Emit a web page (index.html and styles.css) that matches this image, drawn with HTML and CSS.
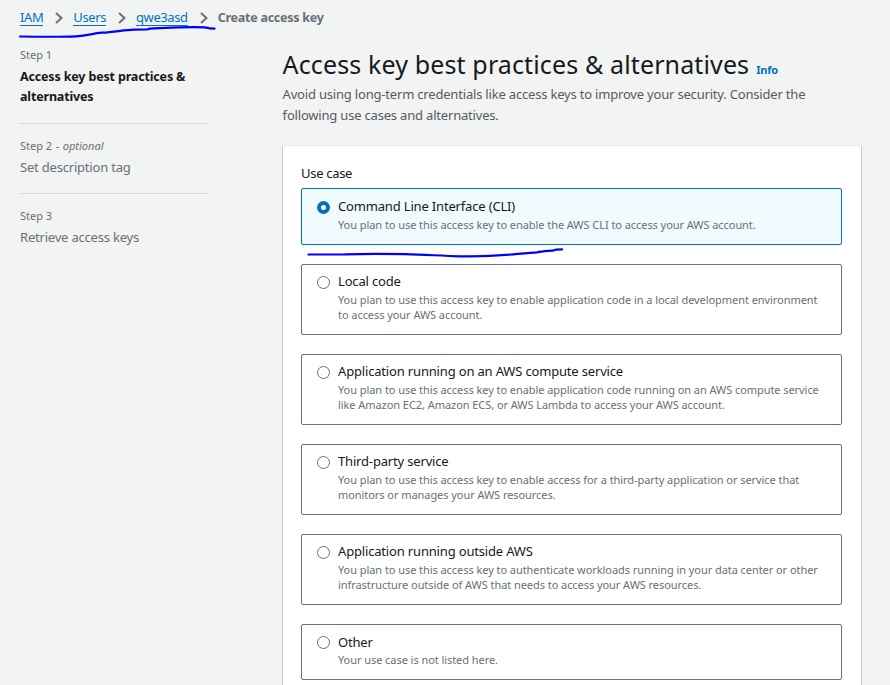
FILE: index.html
```html
<!DOCTYPE html>
<html lang="en">
<head>
<meta charset="utf-8">
<title>Create access key</title>
<link rel="stylesheet" href="styles.css">
</head>
<body>
<nav class="breadcrumbs">
  <a class="crumb">IAM</a>
  <svg class="chevron" viewBox="0 0 8 12"><path d="M1 1l5.500 5L1 11"/></svg>
  <a class="crumb">Users</a>
  <svg class="chevron" viewBox="0 0 8 12"><path d="M1 1l5.500 5L1 11"/></svg>
  <a class="crumb">qwe3asd</a>
  <svg class="chevron" viewBox="0 0 8 12"><path d="M1 1l5.500 5L1 11"/></svg>
  <span class="current">Create access key</span>
</nav>
<div class="layout">
  <aside class="steps">
    <div class="step active">
      <div class="step-label">Step 1</div>
      <div class="step-title">Access key best practices &amp; alternatives</div>
    </div>
    <div class="step">
      <div class="step-label">Step 2 <span class="dash">-</span> <em>optional</em></div>
      <div class="step-title">Set description tag</div>
    </div>
    <div class="step">
      <div class="step-label">Step 3</div>
      <div class="step-title">Retrieve access keys</div>
    </div>
  </aside>
  <main class="content">
    <h1>Access key best practices &amp; alternatives <a class="info">Info</a></h1>
    <p class="intro">Avoid using long-term credentials like access keys to improve your security. Consider the following use cases and alternatives.</p>
    <section class="card">
      <div class="field-label">Use case</div>
      <div class="tiles">
        <div class="tile selected">
          <span class="radio"></span>
          <div><div class="tile-title">Command Line Interface (CLI)</div>
          <div class="tile-text">You plan to use this access key to enable the AWS CLI to access your AWS account.</div></div>
        </div>
        <div class="tile">
          <span class="radio"></span>
          <div><div class="tile-title">Local code</div>
          <div class="tile-text">You plan to use this access key to enable application code in a local development environment<br>to access your AWS account.</div></div>
        </div>
        <div class="tile">
          <span class="radio"></span>
          <div><div class="tile-title">Application running on an AWS compute service</div>
          <div class="tile-text">You plan to use this access key to enable application code running on an AWS compute service<br>like Amazon EC2, Amazon ECS, or AWS Lambda to access your AWS account.</div></div>
        </div>
        <div class="tile">
          <span class="radio"></span>
          <div><div class="tile-title">Third-party service</div>
          <div class="tile-text">You plan to use this access key to enable access for a third-party application or service that<br>monitors or manages your AWS resources.</div></div>
        </div>
        <div class="tile">
          <span class="radio"></span>
          <div><div class="tile-title">Application running outside AWS</div>
          <div class="tile-text">You plan to use this access key to authenticate workloads running in your data center or other<br>infrastructure outside of AWS that needs to access your AWS resources.</div></div>
        </div>
        <div class="tile last">
          <span class="radio"></span>
          <div><div class="tile-title">Other</div>
          <div class="tile-text">Your use case is not listed here.</div></div>
        </div>
      </div>
    </section>
  </main>
</div>
<svg class="marks" viewBox="0 0 890 685">
  <path d="M20 36.500C40 36.800 60 37 76 36.300C88 35.700 92 33.500 102 32.700C114 32.200 124 30 134 29.700L147 29.500L150 28.600C165 28 178 27.200 194 27.200C202 27.200 208 27.600 210 28.400L214.500 28.700"/>
  <path d="M308.500 254.500L345 254.400C365 253.600 385 253.700 405 254.200C425 254.600 440 255.800 460 256.300C485 256.700 505 255.200 518 253.800L537 252.400C542 250.900 549 251 554 250.400L556 249.600L562 249.400"/>
</svg>
</body>
</html>
```
FILE: styles.css
```css
* { box-sizing: border-box; }
body {
  margin: 0;
  height: 685px;
  overflow: hidden;
  position: relative;
  background: #f2f3f3;
  color: #16191f;
  font: 13px/20px "Noto Sans", sans-serif;
  letter-spacing: -0.19px;
}
.breadcrumbs {
  display: flex;
  align-items: flex-start;
  height: 20px;
  margin: 7px 0 0 20px;
  color: #687078;
}
.crumb {
  height: 19px;
  border-bottom: 1px solid #0073bb;
  color: #0073bb;
  white-space: nowrap;
  letter-spacing: -0.4px;
}
.chevron {
  width: 8px;
  height: 12px;
  margin: 5px 10px 0 12px;
  flex: none;
  fill: none;
  stroke: #687078;
  stroke-width: 2;
}
.current { padding-top: 1px; font-weight: 700; font-size: 12.5px; letter-spacing: -0.25px; }
.layout {
  display: grid;
  grid-template-columns: 188px 580px;
  column-gap: 74px;
  margin-left: 20px;
}
.steps { padding-top: 20px; color: #687078; }
.step { padding-bottom: 16px; border-bottom: 1px solid #d5dbdb; margin-bottom: 14px; }
.step:last-child { border-bottom: 0; }
.step-label { font-size: 11px; line-height: 16px; letter-spacing: 0; }
.dash { margin: 0 0.7px; }
.step-title { margin-top: 3px; letter-spacing: -0.2px; }
.active .step-title {
  margin-top: 4px;
  color: #16191f;
  font-weight: 700;
  font-size: 12.5px;
  letter-spacing: -0.16px;
}
.content { padding-top: 22px; }
h1 {
  margin: 0;
  height: 35px;
  padding-left: 0.6px;
  font-size: 25px;
  line-height: 30px;
  font-weight: 400;
  letter-spacing: 0.13px;
  white-space: nowrap;
}
.info {
  margin-left: 0.5px;
  font-size: 11px;
  font-weight: 700;
  letter-spacing: -0.3px;
  color: #0073bb;
}
.intro { margin: 0 0 19px; padding-left: 0.6px; line-height: 21px; color: #545b64; }
.card {
  height: 560px;
  padding: 17px 19px 0 18px;
  background: #fff;
  border: 1px solid #cbd0d0;
  border-top-color: #eaeded;
}
.field-label { margin-bottom: 5px; letter-spacing: -0.3px; }
.tiles { display: flex; flex-direction: column; gap: 19px; }
.tile {
  display: flex;
  padding: 6px 8px 12px 15px;
  border: 1px solid #687078;
  border-radius: 2px;
}
.radio {
  flex: none;
  width: 13px;
  height: 13px;
  margin: 5px 8px 0 0;
  border: 1px solid #687078;
  border-radius: 50%;
  background: #fff;
}
.tile-title { line-height: 20px; white-space: nowrap; letter-spacing: -0.17px; }
.tile-text {
  margin-top: 1px;
  font-size: 11px;
  line-height: 15px;
  letter-spacing: -0.06px;
  white-space: nowrap;
  color: #687078;
}
.selected { padding-top: 7px; border-color: #0073bb; background: #f1faff; }
.selected .radio { border: 4px solid #0073bb; }
.last { padding-top: 7px; padding-bottom: 12px; }
.last .radio { margin-top: 4px; }
.last .tile-text { margin-top: 0; }
.marks {
  position: absolute;
  inset: 0;
  width: 890px;
  height: 685px;
  fill: none;
  stroke: #0000f8;
  stroke-width: 2.2;
  stroke-linecap: round;
  stroke-linejoin: round;
  pointer-events: none;
}
```
